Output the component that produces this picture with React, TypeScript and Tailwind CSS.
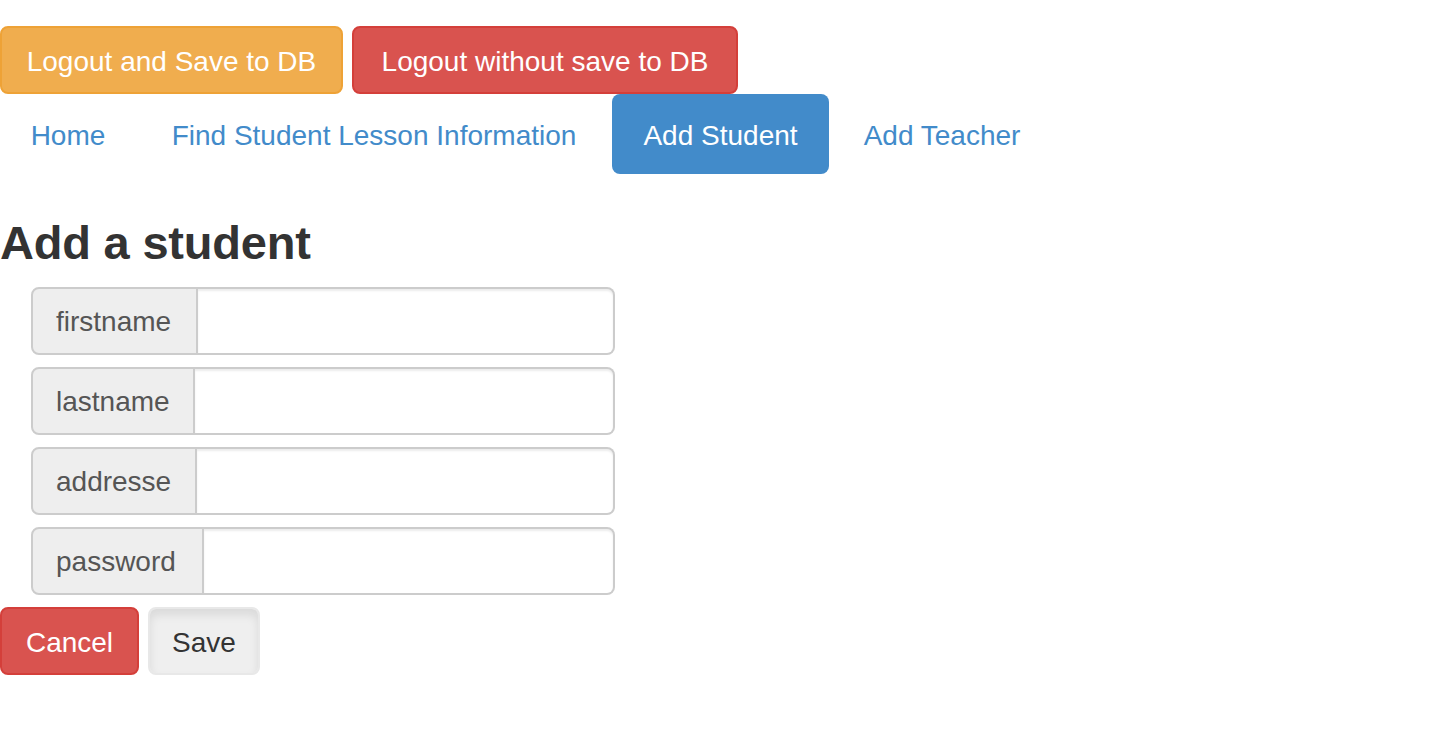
const fields = [
  { name: "firstname", w: "w-[167px]" },
  { name: "lastname", w: "w-[164px]" },
  { name: "addresse", w: "w-[166px]" },
  { name: "password", w: "w-[173px]" },
];

const App = () => {
  return (
    <div className="min-h-[756px] bg-white text-[28px] text-[#333] font-['Liberation_Sans',Arial,sans-serif]">
      <div className="pt-[26px] flex gap-[9px]">
        <button className="w-[343px] h-[68px] pt-[4px] rounded-[8px] border-2 border-[#eea236] bg-[#f0ad4e] text-white">
          Logout and Save to DB
        </button>
        <button className="w-[386px] h-[68px] pt-[4px] rounded-[8px] border-2 border-[#d43f3a] bg-[#d9534f] text-white">
          Logout without save to DB
        </button>
      </div>

      <ul className="flex gap-[4px] h-[80px]">
        <li className="w-[136px] pt-[3px] flex items-center justify-center text-[#428bca] rounded-[8px]">Home</li>
        <li className="w-[468px] pt-[3px] flex items-center justify-center text-[#428bca] rounded-[8px]">
          Find Student Lesson Information
        </li>
        <li className="w-[217px] pt-[3px] flex items-center justify-center text-white bg-[#428bca] rounded-[8px]">
          Add Student
        </li>
        <li className="w-[218px] pt-[3px] flex items-center justify-center text-[#428bca] rounded-[8px]">Add Teacher</li>
      </ul>

      <h3 className="mt-[42px] mb-[18px] text-[47px] leading-[53px] font-bold tracking-[-0.2px]">Add a student</h3>

      <div className="pl-[31px] w-[615px] flex flex-col gap-[12px]">
        {fields.map((f) => (
          <div key={f.name} className="flex h-[68px]">
            <span
              className={`${f.w} shrink-0 flex items-center pt-[2px] pl-[23px] bg-[#eee] border-2 border-[#ccc] rounded-l-[8px] text-[#555]`}
            >
              {f.name}
            </span>
            <input
              type="text"
              className="flex-1 min-w-0 border-2 border-l-0 border-[#ccc] rounded-r-[8px] bg-white shadow-[inset_0_2px_2px_rgba(0,0,0,0.075)] outline-none"
            />
          </div>
        ))}
      </div>

      <div className="mt-[12px] flex gap-[9px]">
        <button className="w-[139px] h-[68px] pt-[3px] rounded-[8px] border-2 border-[#d43f3a] bg-[#d9534f] text-white">
          Cancel
        </button>
        <button className="w-[112px] h-[68px] pt-[3px] rounded-[8px] border-2 border-[#e8e8e8] bg-[#efefef] text-[#333] shadow-[inset_0_6px_10px_rgba(0,0,0,0.09)]">
          Save
        </button>
      </div>
    </div>
  );
};

export default App;
